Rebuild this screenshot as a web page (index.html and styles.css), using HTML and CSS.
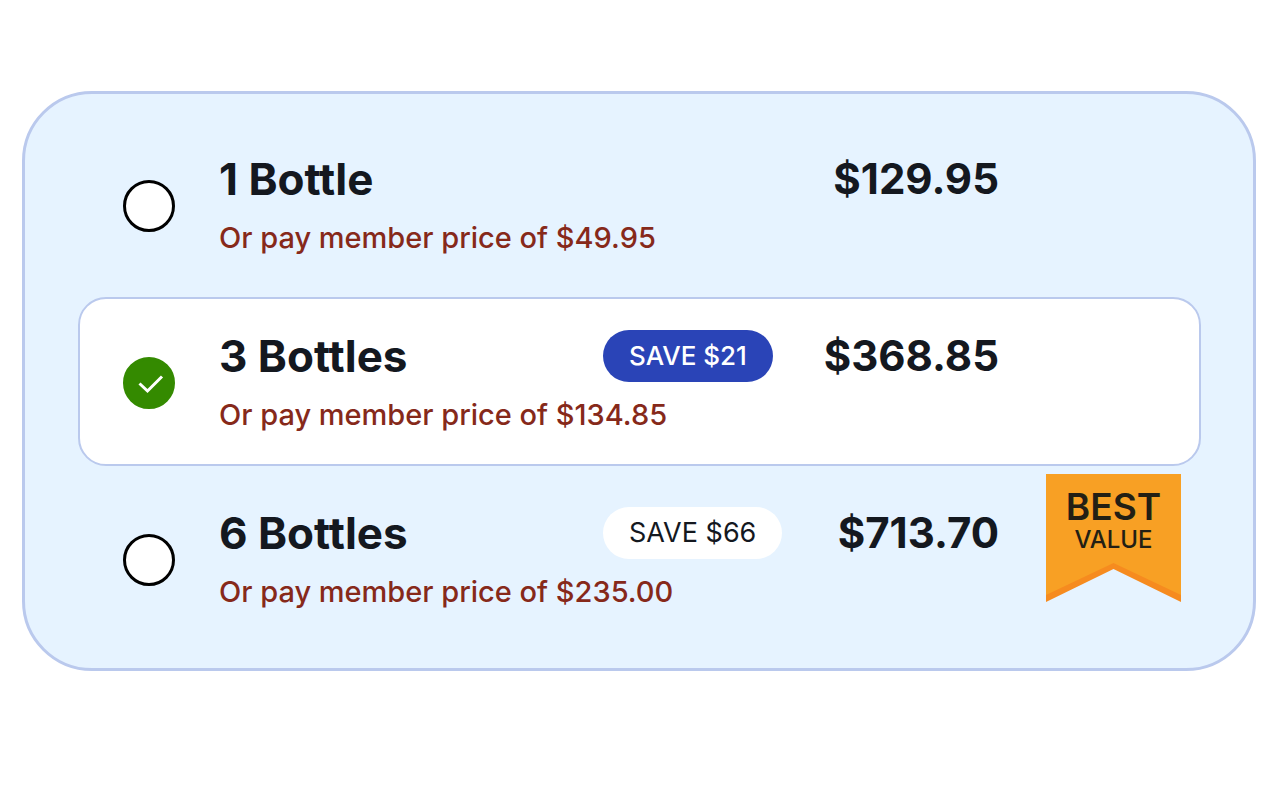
FILE: index.html
```html
<!DOCTYPE html>
<html lang="en">
<head>
<meta charset="UTF-8">
<meta name="viewport" content="width=device-width, initial-scale=1.0">
<title>Choose your bottles</title>
<link rel="stylesheet" href="styles.css">
</head>
<body>
<form class="offers">
  <label class="offer" for="qty1">
    <span class="radio"><input type="radio" name="qty" id="qty1" value="1"></span>
    <span class="title">1 Bottle</span>
    <span class="price">$129.95</span>
    <span class="member">Or pay member price of $49.95</span>
  </label>

  <label class="offer selected" for="qty3">
    <span class="radio">
      <input type="radio" name="qty" id="qty3" value="3" checked>
      <svg class="check" viewBox="0 0 52 52"><path d="M16.500 26.500 L24.500 34 L39 19.500" fill="none" stroke="#fff" stroke-width="3"/></svg>
    </span>
    <span class="title">3 Bottles</span>
    <span class="save">SAVE $21</span>
    <span class="price">$368.85</span>
    <span class="member">Or pay member price of $134.85</span>
  </label>

  <label class="offer" for="qty6">
    <span class="radio"><input type="radio" name="qty" id="qty6" value="6"></span>
    <span class="title">6 Bottles</span>
    <span class="save">SAVE $66</span>
    <span class="price">$713.70</span>
    <span class="member">Or pay member price of $235.00</span>
    <span class="ribbon">
      <svg class="ribbon-bg" viewBox="0 0 135 128">
        <path d="M0 0H135V128L67.500 95L0 128Z" fill="#f68b1f"/>
        <path d="M0 0H135V121L67.500 89L0 121Z" fill="#f8a024"/>
      </svg>
      <span class="best">BEST</span>
      <span class="value">VALUE</span>
    </span>
  </label>
</form>
</body>
</html>
```

FILE: styles.css
```css
* {
  box-sizing: border-box;
}
body {
  margin: 0;
  padding: 91px 24px 0 22px;
  background: #fff;
  color: #14181f;
  font-family: Inter, "Liberation Sans", sans-serif;
}
.offers {
  display: flex;
  flex-direction: column;
  gap: 8px;
  padding: 26px 52px 25px 53px;
  border: 3px solid #bac9ed;
  border-radius: 70px;
  background: #e6f3ff;
}
.offer {
  position: relative;
  display: grid;
  grid-template-columns: 52px 340px auto 1fr;
  grid-template-rows: 52px 40px;
  row-gap: 13px;
  align-items: center;
  padding: 31px 200px 29px 43px;
  border: 2px solid transparent;
  border-radius: 28px;
  column-gap: 44px;
  cursor: pointer;
}
.selected {
  background: #fff;
  border-color: #bac9ed;
}
.radio {
  position: relative;
  grid-row: 1 / 3;
  width: 52px;
  height: 52px;
}
.radio input {
  appearance: none;
  display: block;
  width: 52px;
  height: 52px;
  margin: 0;
  border: 3px solid #000;
  border-radius: 50%;
  background: #fff;
}
.radio input:checked {
  border-color: #348a00;
  background: #348a00;
}
.check {
  position: absolute;
  top: 0;
  left: 0;
  width: 52px;
  height: 52px;
}
.title,
.price {
  font-size: 42px;
  line-height: 52px;
  font-weight: 700;
}
.title {
  font-size: 44px;
}
.price {
  grid-column: 4;
  text-align: right;
}
.save {
  grid-column: 3;
  padding: 0 26px;
  border-radius: 26px;
  background: #fff;
  font-size: 27px;
  line-height: 52px;
  white-space: nowrap;
}
.selected .save {
  background: #2a44b7;
  color: #fff;
  font-size: 26px;
  font-weight: 500;
}
.member {
  grid-column: 2 / 5;
  grid-row: 2;
  color: #86291a;
  font-size: 29px;
  line-height: 40px;
  font-weight: 500;
}
.ribbon {
  position: absolute;
  top: -2px;
  right: 18px;
  display: flex;
  flex-direction: column;
  align-items: center;
  width: 135px;
  height: 128px;
  padding-top: 14px;
  color: #231f14;
}
.ribbon-bg {
  position: absolute;
  top: 0;
  left: 0;
  width: 135px;
  height: 128px;
}
.best,
.value {
  position: relative;
  font-weight: 600;
}
.best {
  font-size: 37px;
  line-height: 37px;
}
.value {
  font-size: 24px;
  line-height: 29px;
  font-weight: 500;
}
```
